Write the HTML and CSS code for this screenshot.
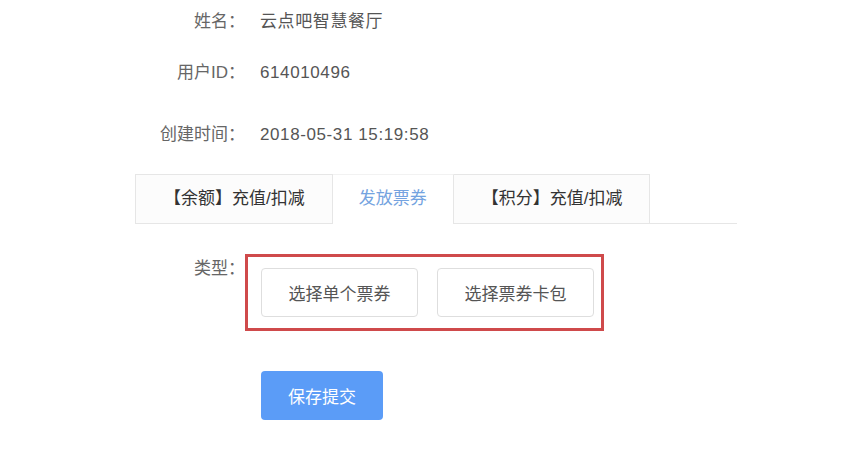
FILE: index.html
```html
<!DOCTYPE html>
<html lang="zh-CN">
<head>
  <meta charset="UTF-8">
  <title>会员详情</title>
  <link rel="stylesheet" href="styles.css">
</head>
<body>
  <div class="container">
    <div class="info-row row-name">
      <div class="label">姓名：</div>
      <div class="value">云点吧智慧餐厅</div>
    </div>
    <div class="info-row row-id">
      <div class="label">用户ID：</div>
      <div class="value">614010496</div>
    </div>
    <div class="info-row row-time">
      <div class="label">创建时间：</div>
      <div class="value">2018-05-31 15:19:58</div>
    </div>

    <div class="tabs">
      <div class="tab">【余额】充值/扣减</div>
      <div class="tab active">发放票券</div>
      <div class="tab">【积分】充值/扣减</div>
    </div>

    <div class="type-row">
      <div class="label">类型：</div>
      <div class="choice-group">
        <button class="btn">选择单个票券</button>
        <button class="btn">选择票券卡包</button>
      </div>
    </div>

    <div class="actions">
      <button class="btn-submit">保存提交</button>
    </div>
  </div>
</body>
</html>
```

FILE: styles.css
```css
body {
  margin: 0;
  background: #fff;
  font-family: "Liberation Sans", "Noto Sans CJK SC", sans-serif;
  font-size: 17px;
  color: #555;
}

.container {
  width: 843px;
  height: 460px;
  padding-left: 135px;
  box-sizing: border-box;
  overflow: hidden;
}

.info-row {
  display: flex;
  height: 40px;
  line-height: 40px;
}

.row-name {
  padding-top: 2px;
  margin-bottom: 11px;
}

.row-id {
  margin-bottom: 22px;
}

.row-time {
  margin-bottom: 19px;
}

.label {
  width: 110px;
  text-align: right;
  color: #666;
  flex-shrink: 0;
}

.value {
  margin-left: 15px;
  color: #555;
  letter-spacing: 0.6px;
}

.tabs {
  display: flex;
  width: 602px;
  border-bottom: 1px solid #e6e6e6;
  box-sizing: border-box;
}

.tab {
  height: 48px;
  line-height: 48px;
  padding: 0 27px 0 28px;
  color: #333;
  background: #fcfcfc;
  border: 1px solid #e6e6e6;
  border-bottom: none;
  margin-bottom: -1px;
}

.tab + .tab {
  border-left: none;
}

.tab.active {
  padding: 0 26px;
  color: #74a3e0;
  background: #fff;
  height: 49px;
  border-top-color: #f2f2f2;
}

.type-row {
  display: flex;
  align-items: flex-start;
  margin-top: 30px;
}

.type-row .label {
  line-height: 30px;
}

.choice-group {
  display: flex;
  gap: 19px;
  border: 3px solid #cf4a4b;
  padding: 11px 7px 11px 13px;
}

.btn {
  width: 157px;
  height: 49px;
  font-family: inherit;
  font-size: 17px;
  color: #555;
  background: #fff;
  border: 1px solid #dedede;
  border-radius: 4px;
  cursor: pointer;
}

.actions {
  margin-top: 40px;
  padding-left: 126px;
}

.btn-submit {
  width: 122px;
  height: 49px;
  font-family: inherit;
  font-size: 17px;
  color: #fff;
  background: #5b9cf7;
  border: none;
  border-radius: 4px;
  cursor: pointer;
}
```
